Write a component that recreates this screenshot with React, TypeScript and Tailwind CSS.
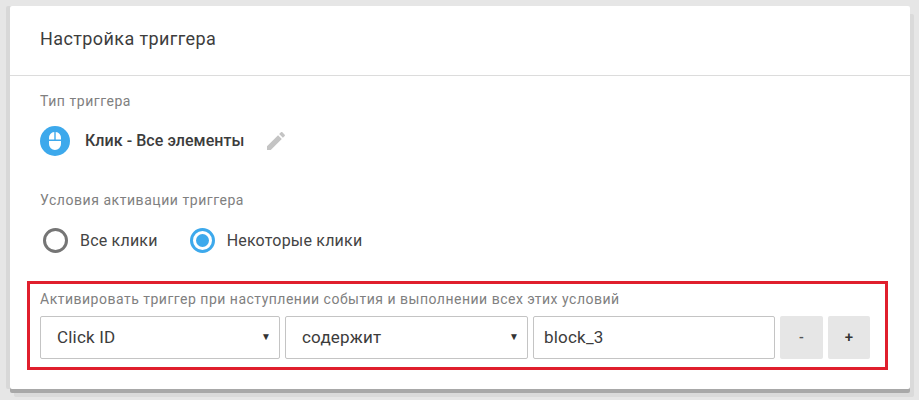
function MouseIcon() {
  return (
    <svg width="30" height="30" viewBox="0 0 30 30">
      <circle cx="15" cy="15" r="15" fill="#3DA9EC" />
      <path d="M9 13.500v-1.500a5.400 5.400 0 0 1 5.300-5.900v7.400zM15.700 6.100a5.400 5.400 0 0 1 5.300 5.900v1.500h-5.300zM9 15h12v3a6 6 0 0 1-12 0z" fill="#fff" />
    </svg>
  );
}

function EditIcon() {
  return (
    <svg width="24" height="24" viewBox="0 0 24 24" fill="#c4c4c4" className="ml-[20px]">
      <path d="M3 17.250V21h3.750L17.810 9.940l-3.750-3.750L3 17.250zM20.710 7.040c.39-.39.39-1.020 0-1.410l-2.340-2.340c-.39-.39-1.020-.39-1.410 0l-1.830 1.830 3.750 3.750 1.830-1.830z" />
    </svg>
  );
}

function Radio({ label, checked }: { label: string; checked?: boolean }) {
  return (
    <div className="flex items-center gap-[12px]">
      <div
        className={`flex h-[25px] w-[25px] items-center justify-center rounded-full border-[3px] ${
          checked ? 'border-[#3DA9EC]' : 'border-[#757575]'
        }`}
      >
        {checked && <div className="h-[13px] w-[13px] rounded-full bg-[#3DA9EC]" />}
      </div>
      <span className="text-[16px] tracking-[0.2px] text-[#444]">{label}</span>
    </div>
  );
}

function SelectBox({ label, width }: { label: string; width: string }) {
  return (
    <div className={`flex h-[43px] items-center justify-between rounded-[2px] border border-[#c4c4c4] bg-white pl-4 pr-[8px] ${width}`}>
      <span className="text-[17px] tracking-[0.2px] text-[#3c3c3c]">{label}</span>
      <span className="mb-[2px] text-[10px] text-[#333]">▼</span>
    </div>
  );
}

export default function App() {
  return (
    <div className="h-[400px] w-[919px] overflow-hidden bg-[#e6e6e6] pl-[10px] pt-[6px] font-['Roboto',sans-serif]">
      <div className="h-[383px] w-[900px] rounded-[2px] bg-white shadow-[0_4px_0_#a8a8a8,4px_8px_0_#dadada,-4px_0_0_#d8d8d8]">
        {/* Header */}
        <div className="flex h-[70px] items-center border-b border-[#dcdcdc] pb-[4px] pl-[30px]">
          <h1 className="text-[18px] font-normal tracking-[0.4px] text-[#3d3d3d]">Настройка триггера</h1>
        </div>

        <div className="pl-[30px] pt-[16px]">
          <div className="text-[14px] leading-[18px] tracking-[0.55px] text-[#808080]">Тип триггера</div>

          <div className="mt-[16px] flex items-center">
            <MouseIcon />
            <span className="ml-[15px] text-[16px] font-medium tracking-[0.05px] text-[#3c3c3c]">Клик - Все элементы</span>
            <EditIcon />
          </div>

          <div className="mt-[35px] text-[14px] leading-[18px] tracking-[0.55px] text-[#808080]">Условия активации триггера</div>

          <div className="ml-[3px] mt-[19px] flex gap-[32px]">
            <Radio label="Все клики" />
            <Radio label="Некоторые клики" checked />
          </div>
        </div>

        {/* Highlighted condition row */}
        <div className="ml-[17px] mt-[28px] h-[89px] w-[861px] border-[3px] border-[#E01F2D] pl-[10px] pt-[6px]">
          <div className="text-[14px] leading-[18px] tracking-[0.5px] text-[#808080]">
            Активировать триггер при наступлении события и выполнении всех этих условий
          </div>
          <div className="mt-[8px] flex gap-[5px]">
            <SelectBox label="Click ID" width="w-[240px]" />
            <SelectBox label="содержит" width="w-[243px]" />
            <div className="flex h-[43px] w-[242px] items-center rounded-[2px] border border-[#c4c4c4] bg-white pl-[10px]">
              <span className="text-[17px] tracking-[0.2px] text-[#3c3c3c]">block_3</span>
            </div>
            <button className="h-[43px] w-[43px] rounded-[2px] bg-[#e6e6e6] text-[14px] font-medium text-[#555]">-</button>
            <button className="h-[43px] w-[42px] rounded-[2px] bg-[#e6e6e6] text-[15px] font-medium text-[#333]">+</button>
          </div>
        </div>
      </div>
    </div>
  );
}
